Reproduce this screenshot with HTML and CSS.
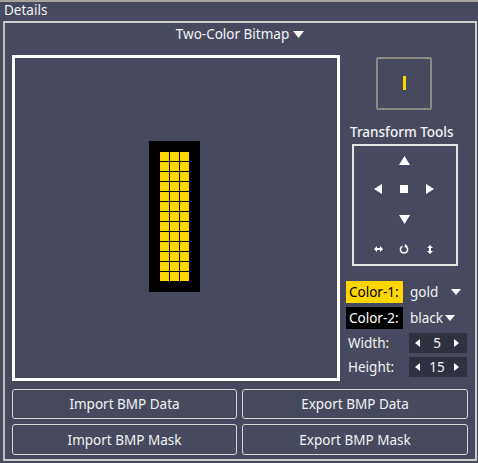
FILE: index.html
```html
<!DOCTYPE html>
<html>
<head>
<meta charset="utf-8">
<link rel="stylesheet" href="styles.css">
</head>
<body>
<div class="heading">Details</div>
<div class="panel">
  <div class="title">Two-Color Bitmap <svg class="tri" width="11" height="7" viewBox="0 0 11 7"><path d="M0 0H11L5.5 7Z" fill="#fff"/></svg></div>
  <div class="main">
    <div class="canvas">
      <div class="bitmap">
        <div class="cells">
          <span></span><span></span><span></span><span></span><span></span><span></span><span></span><span></span><span></span><span></span><span></span><span></span><span></span>
          <span></span><span></span><span></span><span></span><span></span><span></span><span></span><span></span><span></span><span></span><span></span><span></span><span></span>
          <span></span><span></span><span></span><span></span><span></span><span></span><span></span><span></span><span></span><span></span><span></span><span></span><span></span>
        </div>
      </div>
    </div>
    <div class="side">
      <div class="preview"><div class="mini"></div></div>
      <div class="tt-label">Transform Tools</div>
      <div class="tools">
        <span></span>
        <span><svg width="11" height="9" viewBox="0 0 11 9"><path d="M5.5 0L11 9H0Z" fill="#fff"/></svg></span>
        <span></span>
        <span><svg width="8" height="10" viewBox="0 0 8 10"><path d="M0 5L8 0V10Z" fill="#fff"/></svg></span>
        <span><svg width="8" height="8" viewBox="0 0 8 8"><rect width="8" height="8" fill="#fff"/></svg></span>
        <span><svg width="8" height="10" viewBox="0 0 8 10"><path d="M8 5L0 0V10Z" fill="#fff"/></svg></span>
        <span></span>
        <span><svg width="11" height="9" viewBox="0 0 11 9"><path d="M5.5 9L11 0H0Z" fill="#fff"/></svg></span>
        <span></span>
        <span><svg width="9" height="6" viewBox="0 0 9 6"><path d="M0 3L3 0V2H6V0L9 3L6 6V4H3V6Z" fill="#fff"/></svg></span>
        <span><svg width="10" height="10" viewBox="0 0 10 10"><path d="M3.5 2.2A3.6 3.6 0 1 0 6.5 2.2" fill="none" stroke="#fff" stroke-width="1.5"/><path d="M6 0L9 2.4L5.6 3.6Z" fill="#fff"/></svg></span>
        <span><svg width="6" height="9" viewBox="0 0 6 9"><path d="M3 0L6 3H4V6H6L3 9L0 6H2V3H0Z" fill="#fff"/></svg></span>
      </div>
      <div class="colors">
        <div class="crow">
          <span class="clabel gold">Color-1:</span>
          <span class="cval">gold</span>
          <svg class="ctri" width="10" height="6" viewBox="0 0 10 6"><path d="M0 0H10L5 6Z" fill="#fff"/></svg>
        </div>
        <div class="crow">
          <span class="clabel black">Color-2:</span>
          <span class="cval">black</span>
          <svg class="ctri2" width="10" height="6" viewBox="0 0 10 6"><path d="M0 0H10L5 6Z" fill="#fff"/></svg>
        </div>
        <div class="srow">
          <span class="slabel">Width:</span>
          <span class="spin">
            <svg width="5" height="8" viewBox="0 0 5 8"><path d="M0 4L5 0V8Z" fill="#fff"/></svg>
            <span class="num">5</span>
            <svg width="5" height="8" viewBox="0 0 5 8"><path d="M5 4L0 0V8Z" fill="#fff"/></svg>
          </span>
        </div>
        <div class="srow">
          <span class="slabel">Height:</span>
          <span class="spin">
            <svg width="5" height="8" viewBox="0 0 5 8"><path d="M0 4L5 0V8Z" fill="#fff"/></svg>
            <span class="num">15</span>
            <svg width="5" height="8" viewBox="0 0 5 8"><path d="M5 4L0 0V8Z" fill="#fff"/></svg>
          </span>
        </div>
      </div>
    </div>
  </div>
  <div class="buttons">
    <button class="btn">Import BMP Data</button>
    <button class="btn">Export BMP Data</button>
    <button class="btn tall">Import BMP Mask</button>
    <button class="btn tall">Export BMP Mask</button>
  </div>
</div>
</body>
</html>
```
FILE: styles.css
```css
html, body {
  margin: 0;
  padding: 0;
}
body {
  width: 478px;
  height: 463px;
  overflow: hidden;
  background: #474a5e;
  border-top: 2px solid #a6a39b;
  box-sizing: border-box;
  font-family: "Noto Sans", "Open Sans", sans-serif;
  font-size: 13.5px;
  color: #f2f2f2;
}
.heading {
  height: 19px;
  line-height: 17px;
  padding-left: 4px;
}
.panel {
  margin-left: 3px;
  width: 474px;
  height: 440px;
  box-sizing: border-box;
  border: 2px solid #cfcfca;
  border-left-color: #bdbdb6;
  padding: 2px 0 0 7px;
}
.title {
  height: 18px;
  line-height: 18px;
  text-align: center;
  padding-right: 7px;
  margin-bottom: 12px;
  display: flex;
  justify-content: center;
  align-items: center;
  gap: 4px;
}
.main {
  display: flex;
  height: 326px;
}
.canvas {
  width: 328px;
  height: 326px;
  box-sizing: border-box;
  border: 3px solid #ffffff;
  display: flex;
  align-items: center;
  justify-content: center;
  padding-right: 3px;
  padding-bottom: 3px;
}
.bitmap {
  background: #000;
  padding: 11px;
}
.cells {
  display: grid;
  grid-template-columns: repeat(3, 9px);
  grid-auto-rows: 9px;
  gap: 1px;
}
.cells span {
  background: #ffd700;
}
.side {
  width: 134px;
  display: flex;
  flex-direction: column;
}
.preview {
  margin: 2px 0 0 36px;
  width: 56px;
  height: 55px;
  box-sizing: border-box;
  border: 2px solid #8d8a84;
  border-radius: 2px;
  display: flex;
  align-items: center;
  justify-content: center;
}
.mini {
  width: 3px;
  height: 14px;
  background: #ffd700;
}
.tt-label {
  margin-top: 13px;
  height: 22px;
  line-height: 18px;
  padding-left: 10px;
  font-weight: 500;
}
.tools {
  margin-left: 12px;
  width: 106px;
  height: 122px;
  box-sizing: border-box;
  border: 2px solid #e4e4e4;
  display: grid;
  grid-template-columns: 11px 26px 26px 26px;
  grid-template-rows: 28px 30px 30px 30px;
}
.tools span {
  display: flex;
  align-items: center;
  justify-content: center;
}
.tools span:nth-child(3n+1) {
  grid-column: 2;
}
.colors {
  margin-top: 15px;
  padding-left: 6px;
  display: flex;
  flex-direction: column;
}
.crow {
  height: 22px;
  margin-bottom: 4px;
  display: flex;
  align-items: center;
}
.clabel {
  width: 57px;
  height: 22px;
  line-height: 22px;
  box-sizing: border-box;
  padding-left: 3px;
  white-space: nowrap;
}
.clabel.gold {
  background: #ffd700;
  color: #000;
}
.clabel.black {
  background: #000;
  color: #fff;
}
.cval {
  margin-left: 7px;
}
.ctri {
  margin-left: 13px;
}
.ctri2 {
  margin-left: 2px;
}
.srow {
  height: 20px;
  margin-bottom: 4px;
  display: flex;
  align-items: center;
}
.slabel {
  width: 61px;
  padding-left: 2px;
}
.spin {
  width: 58px;
  height: 20px;
  background: #2e3140;
  display: flex;
  align-items: center;
  justify-content: space-between;
  box-sizing: border-box;
  padding: 0 8px 0 6px;
}
.num {
  flex: 1;
  text-align: center;
}
.buttons {
  margin-top: 8px;
  display: grid;
  grid-template-columns: 225px 226px;
  grid-template-rows: 30px 31px;
  column-gap: 5px;
  row-gap: 5px;
}
.btn {
  font-family: "Noto Sans", "Open Sans", sans-serif;
  font-size: 13.5px;
  color: #f2f2f2;
  background: #474a5e;
  border: 1.5px solid #d6d6d2;
  border-radius: 3px;
  padding: 0;
  margin: 0;
}
```
